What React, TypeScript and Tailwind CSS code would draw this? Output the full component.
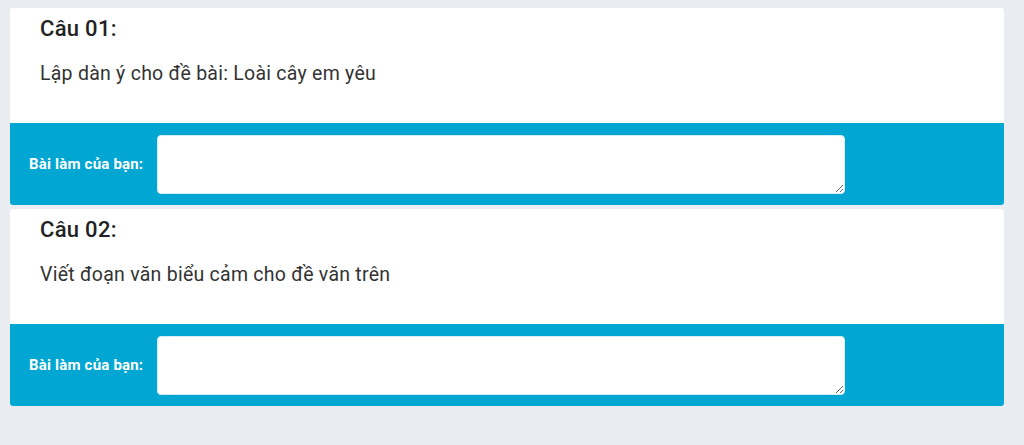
const questions = [
  { label: "Câu 01:", text: "Lập dàn ý cho đề bài: Loài cây em yêu" },
  { label: "Câu 02:", text: "Viết đoạn văn biểu cảm cho đề văn trên" },
];

const QuestionCard = ({ label, text }: { label: string; text: string }) => {
  return (
    <div className="rounded-[3px] overflow-hidden bg-white">
      <div className="h-[115px] pl-[30px] pt-[8px]">
        <h3 className="text-[22px] leading-[26px] font-medium tracking-[0.3px] text-[#222]">{label}</h3>
        <p className="mt-[20px] text-[19.5px] leading-[24px] tracking-[0.25px] text-[#333]">{text}</p>
      </div>
      <div className="bg-[#02a6d2] flex items-center h-[82px] pl-[19px]">
        <span className="w-[128px] text-[15px] font-bold tracking-[0.2px] text-white">Bài làm của bạn:</span>
        <textarea className="w-[688px] h-[59px] bg-white rounded-[4px] border border-[#d6eef6] outline-none" />
      </div>
    </div>
  );
};

export default function App() {
  return (
    <div
      className="min-h-screen bg-[#e9edf2] pt-[8px] pl-[10px] pr-[20px]"
      style={{ fontFamily: "Roboto, 'Noto Sans', sans-serif" }}
    >
      <div className="flex flex-col gap-[4px]">
        {questions.map((q) => (
          <QuestionCard key={q.label} label={q.label} text={q.text} />
        ))}
      </div>
    </div>
  );
}
